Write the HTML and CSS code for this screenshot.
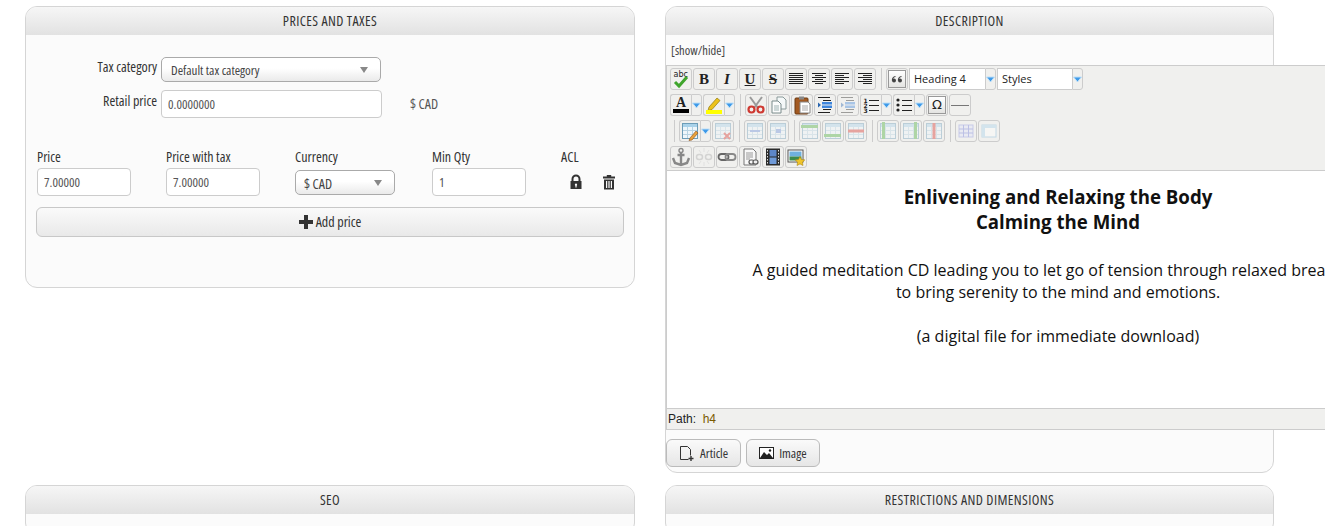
FILE: index.html
```html
<!DOCTYPE html>
<html lang="en">
<head>
    <meta charset="UTF-8">
    <title>Edit product</title>
    <link rel="stylesheet" href="styles.css">
</head>
<body>
    <!-- icon sheet for the editor toolbar -->
    <svg class="icon-sheet" xmlns="http://www.w3.org/2000/svg">
        <symbol id="i-grid" viewBox="0 0 20 20">
            <rect x="2.500" y="2.500" width="15" height="15" fill="#eef6fb" stroke="#6d9db8"/>
            <rect x="3" y="3" width="14" height="3" fill="#a9d2ea"/>
            <path d="M3 9.500h14M3 13.500h14M7.500 6v11M12.500 6v11" stroke="#b7d3e3"/>
        </symbol>
        <symbol id="i-indent" viewBox="0 0 20 20">
            <path d="M3 2.500h12M3 17.500h12M8 5.500h8M8 14.500h8" stroke="#222"/>
            <rect x="7" y="7" width="10" height="2.500" fill="#3f86dc"/>
            <rect x="7" y="10.500" width="10" height="2.500" fill="#3f86dc"/>
            <path d="M3 7.500l3 2.500-3 2.500z" fill="#2a66b0"/>
        </symbol>
        <symbol id="i-arrow" viewBox="0 0 9 9">
            <path d="M0.500 2h8L4.500 7z" fill="#3f9ae8" stroke="#bfe0f8"/>
        </symbol>
    </svg>

    <div class="page">
        <!-- 価格 -->
        <section class="panel">
            <h2 class="panel-title">PRICES AND TAXES</h2>
            <div class="panel-body prices">
                <div class="form-row tax-row">
                    <label class="form-label">Tax category</label>
                    <div class="select select-wide">Default tax category</div>
                </div>
                <div class="form-row retail-row">
                    <label class="form-label">Retail price</label>
                    <input class="text-input input-wide" type="text" value="0.0000000">
                    <span class="unit">$ CAD</span>
                </div>

                <div class="price-grid">
                    <div class="price-col col-price">
                        <label>Price</label>
                        <input class="text-input input-small" type="text" value="7.00000">
                    </div>
                    <div class="price-col col-price">
                        <label>Price with tax</label>
                        <input class="text-input input-small" type="text" value="7.00000">
                    </div>
                    <div class="price-col col-currency">
                        <label>Currency</label>
                        <div class="select select-small">$ CAD</div>
                    </div>
                    <div class="price-col col-price">
                        <label>Min Qty</label>
                        <input class="text-input input-small" type="text" value="1">
                    </div>
                    <div class="price-col">
                        <label>ACL</label>
                        <div class="acl-icons">
                            <svg width="14" height="16" viewBox="0 0 14 16"><path d="M3.500 7V5a3.500 3.500 0 0 1 7 0v2" fill="none" stroke="#333" stroke-width="2"/><path fill-rule="evenodd" d="M1.500 7h11v8h-11zM7 9.500a1.200 1.200 0 0 0-.6 2.200V13.500h1.200v-1.800A1.200 1.200 0 0 0 7 9.500z" fill="#333"/></svg>
                            <svg width="14" height="16" viewBox="0 0 14 16"><path fill-rule="evenodd" d="M1 2.500h3.800V1h4.400v1.500H13v2H1zM2 5.500h10V15.500H2zM4 7v7h1.200V7zM6.400 7v7h1.200V7zM8.800 7v7H10V7z" fill="#333"/></svg>
                        </div>
                    </div>
                </div>

                <button class="btn btn-add" type="button">
                    <svg width="14" height="14" viewBox="0 0 14 14"><path d="M5 0h4v5h5v4H9v5H5V9H0V5h5z" fill="#333"/></svg>
                    Add price
                </button>
            </div>
        </section>

        <!-- 説明 -->
        <section class="panel">
            <h2 class="panel-title">DESCRIPTION</h2>
            <div class="panel-body description">
                <a class="toggle-link">[show/hide]</a>

                <div class="editor">
                    <div class="toolbar">
                        <div class="tool-row">
                            <span class="tool"><svg viewBox="0 0 20 20"><text class="abc" x="2.500" y="8">abc</text><path d="M4 13l4 4 8-9" fill="none" stroke="#3fa52c" stroke-width="3"/></svg></span>
                            <span class="tool"><b class="tool-letter">B</b></span>
                            <span class="tool"><i class="tool-letter">I</i></span>
                            <span class="tool"><u class="tool-letter">U</u></span>
                            <span class="tool"><s class="tool-letter">S</s></span>
                            <span class="tool"><svg viewBox="0 0 20 20"><path d="M3 4.500h14M3 6.500h14M3 8.500h14M3 10.500h14M3 12.500h14M3 14.500h14" stroke="#222"/></svg></span>
                            <span class="tool"><svg viewBox="0 0 20 20"><path d="M3 4.500h14M6 6.500h8M3 8.500h14M6 10.500h8M3 12.500h14M6 14.500h8" stroke="#222"/></svg></span>
                            <span class="tool"><svg viewBox="0 0 20 20"><path d="M3 4.500h14M3 6.500h9M3 8.500h14M3 10.500h9M3 12.500h14M3 14.500h9" stroke="#222"/></svg></span>
                            <span class="tool"><svg viewBox="0 0 20 20"><path d="M3 4.500h14M8 6.500h9M3 8.500h14M8 10.500h9M3 12.500h14M8 14.500h9" stroke="#222"/></svg></span>
                            <span class="tool-sep"></span>
                            <span class="tool tool-pressed"><span class="tool-inner"><svg viewBox="0 0 16 16"><circle cx="5" cy="9.500" r="2" fill="#444"/><circle cx="11" cy="9.500" r="2" fill="#444"/><path d="M3.400 9.500C3.400 7 4.600 5.800 6.500 5.500M9.400 9.500C9.400 7 10.600 5.800 12.500 5.500" fill="none" stroke="#444" stroke-width="1.200"/></svg></span></span>
                            <span class="combo combo-format">Heading 4</span><span class="tool-arrow"><svg width="9" height="9"><use href="#i-arrow"/></svg></span>
                            <span class="combo combo-styles">Styles</span><span class="tool-arrow"><svg width="9" height="9"><use href="#i-arrow"/></svg></span>
                        </div>

                        <div class="tool-row">
                            <span class="tool tool-split"><svg viewBox="0 0 20 20"><text class="fore" x="5" y="12">A</text><rect x="2" y="14" width="16" height="4" fill="#000"/></svg></span><span class="tool-arrow"><svg width="9" height="9"><use href="#i-arrow"/></svg></span>
                            <span class="tool tool-split"><svg viewBox="0 0 20 20"><path d="M5 12l8-9 3 2.500-8 9-4 1z" fill="#ecc21c" stroke="#8f7a10" stroke-width=".7"/><rect x="2" y="15" width="16" height="4" fill="#ffff00"/></svg></span><span class="tool-arrow"><svg width="9" height="9"><use href="#i-arrow"/></svg></span>
                            <span class="tool-sep"></span>
                            <span class="tool"><svg viewBox="0 0 20 20"><path d="M4 2l8 11M16 2L8 13" stroke="#9a9a9a" stroke-width="2"/><circle cx="5.500" cy="14.500" r="3" fill="none" stroke="#cf3a32" stroke-width="2.200"/><circle cx="14.500" cy="14.500" r="3" fill="none" stroke="#cf3a32" stroke-width="2.200"/></svg></span>
                            <span class="tool"><svg viewBox="0 0 20 20"><path d="M8 2h6l3 3v9H8z" fill="#f4f8f8" stroke="#8a9a9a"/><path d="M3 6h6l3 3v9H3z" fill="#fbfcfc" stroke="#7a8c8c"/><path d="M5 11h5M5 13h5M5 15h5" stroke="#9fb3b3"/></svg></span>
                            <span class="tool"><svg viewBox="0 0 20 20"><rect x="3" y="3" width="13" height="16" rx="1" fill="#a35a22" stroke="#6c3a12"/><rect x="7" y="1.500" width="5" height="3" fill="#888"/><path d="M8 7h8l2 2v9H8z" fill="#fff" stroke="#888"/><path d="M10 11h6M10 13h6M10 15h6" stroke="#aaa"/></svg></span>
                            <span class="tool"><svg viewBox="0 0 20 20"><use href="#i-indent"/></svg></span>
                            <span class="tool tool-off"><svg viewBox="0 0 20 20"><use href="#i-indent"/></svg></span>
                            <span class="tool tool-split"><svg viewBox="0 0 20 20"><text class="mini" x="2.500" y="7.500">1</text><text class="mini" x="2.500" y="12.500">2</text><text class="mini" x="2.500" y="17.500">3</text><path d="M8 5.500h10M8 10.500h10M8 15.500h10" stroke="#222"/></svg></span><span class="tool-arrow"><svg width="9" height="9"><use href="#i-arrow"/></svg></span>
                            <span class="tool tool-split"><svg viewBox="0 0 20 20"><circle cx="4" cy="5" r="1.600" fill="#222"/><circle cx="4" cy="10" r="1.600" fill="#222"/><circle cx="4" cy="15" r="1.600" fill="#222"/><path d="M8 5.500h10M8 10.500h10M8 15.500h10" stroke="#222"/></svg></span><span class="tool-arrow"><svg width="9" height="9"><use href="#i-arrow"/></svg></span>
                            <span class="tool tool-pressed"><span class="tool-inner omega">Ω</span></span>
                            <span class="tool"><svg viewBox="0 0 20 20"><path d="M1 10.500h18" stroke="#777"/></svg></span>
                        </div>

                        <div class="tool-row">
                            <span class="tool-sep tool-sep-first"></span>
                            <span class="tool tool-split"><svg viewBox="0 0 20 20"><use href="#i-grid"/><path d="M10 17l6-7 2 2-6 7-3 .5z" fill="#e8a13a" stroke="#8a4f1a" stroke-width=".6"/></svg></span><span class="tool-arrow"><svg width="9" height="9"><use href="#i-arrow"/></svg></span>
                            <span class="tool tool-off"><svg viewBox="0 0 20 20"><use href="#i-grid"/><path d="M11 12l6 6M17 12l-6 6" stroke="#d8322a" stroke-width="2"/></svg></span>
                            <span class="tool-sep"></span>
                            <span class="tool tool-off"><svg viewBox="0 0 20 20"><use href="#i-grid"/><rect x="5" y="9" width="10" height="2" fill="#6c8fd8"/></svg></span>
                            <span class="tool tool-off"><svg viewBox="0 0 20 20"><use href="#i-grid"/><rect x="8" y="8" width="5" height="4" fill="#6c8fd8"/></svg></span>
                            <span class="tool-sep"></span>
                            <span class="tool tool-off"><svg viewBox="0 0 20 20"><use href="#i-grid"/><rect x="1" y="4" width="17" height="3" fill="#4caf3c"/></svg></span>
                            <span class="tool tool-off"><svg viewBox="0 0 20 20"><use href="#i-grid"/><rect x="1" y="13" width="17" height="3" fill="#4caf3c"/></svg></span>
                            <span class="tool tool-off"><svg viewBox="0 0 20 20"><use href="#i-grid"/><rect x="2" y="8.500" width="16" height="3" fill="#d8322a"/></svg></span>
                            <span class="tool-sep"></span>
                            <span class="tool tool-off"><svg viewBox="0 0 20 20"><use href="#i-grid"/><rect x="4" y="1" width="3" height="17" fill="#4caf3c"/></svg></span>
                            <span class="tool tool-off"><svg viewBox="0 0 20 20"><use href="#i-grid"/><rect x="13" y="1" width="3" height="17" fill="#4caf3c"/></svg></span>
                            <span class="tool tool-off"><svg viewBox="0 0 20 20"><use href="#i-grid"/><rect x="8.500" y="2" width="3" height="16" fill="#d8322a"/></svg></span>
                            <span class="tool-sep"></span>
                            <span class="tool tool-off"><svg viewBox="0 0 20 20"><rect x="3" y="4" width="14" height="12" fill="#dfe3fa" stroke="#8d96e0"/><path d="M3 8h14M3 12h14M7.500 4v12M12.500 4v12" stroke="#6f7ad8"/></svg></span>
                            <span class="tool tool-off"><svg viewBox="0 0 20 20"><rect x="3" y="4" width="14" height="12" fill="#fff" stroke="#7fb8d8"/><rect x="3" y="4" width="14" height="3" fill="#a8d4ec"/><rect x="3" y="4" width="3" height="12" fill="#a8d4ec"/></svg></span>
                        </div>

                        <div class="tool-row">
                            <span class="tool"><svg viewBox="0 0 20 20"><circle cx="10" cy="3.500" r="2" fill="none" stroke="#888" stroke-width="1.400"/><path d="M10 5.500V18M6.500 8h7M2 11l2 5 6 2 6-2 2-5" fill="none" stroke="#888" stroke-width="2.400"/></svg></span>
                            <span class="tool tool-off"><svg viewBox="0 0 20 20"><rect x="2.500" y="7.500" width="6" height="5" rx="2.500" fill="none" stroke="#aaa" stroke-width="1.500"/><rect x="11.500" y="7.500" width="6" height="5" rx="2.500" fill="none" stroke="#aaa" stroke-width="1.500"/><path d="M10 1v4M10 15v4M5 3l2 3M15 3l-2 3M5 17l2-3M15 17l-2-3" stroke="#ccc"/></svg></span>
                            <span class="tool"><svg viewBox="0 0 20 20"><rect x="1.500" y="7" width="10" height="6" rx="3" fill="none" stroke="#666" stroke-width="1.800"/><rect x="8.500" y="7" width="10" height="6" rx="3" fill="none" stroke="#888" stroke-width="1.800"/></svg></span>
                            <span class="tool"><svg viewBox="0 0 20 20"><path d="M4 2h9l3 3v13H4z" fill="#f8f8f8" stroke="#777"/><path d="M6 6h7M6 8h7M6 10h7M6 12h4" stroke="#999"/><rect x="9" y="13" width="5" height="4" rx="2" fill="none" stroke="#555" stroke-width="1.200"/><rect x="13" y="13" width="5" height="4" rx="2" fill="#eee" stroke="#555" stroke-width="1.200"/></svg></span>
                            <span class="tool"><svg viewBox="0 0 20 20"><rect x="3" y="1.500" width="14" height="17" fill="#2b2b2b"/><rect x="6.500" y="3" width="7" height="6.500" fill="#5d86c8"/><rect x="6.500" y="10.500" width="7" height="6.500" fill="#6f9ad8"/><path d="M4.500 3v14M15.500 3v14" stroke="#ddd" stroke-dasharray="1.500 1.500"/></svg></span>
                            <span class="tool"><svg viewBox="0 0 20 20"><rect x="2" y="3" width="15" height="12" fill="#fff" stroke="#555"/><rect x="3.500" y="4.500" width="12" height="5" fill="#6fb0de"/><rect x="3.500" y="9.500" width="12" height="4" fill="#3c8a4e"/><path d="M14 9.500l1.500 3 3.300.4-2.400 2.300.6 3.300-3-1.600-3 1.600.6-3.300-2.400-2.300 3.300-.4z" fill="#f0c52a" stroke="#a88414" stroke-width=".6"/></svg></span>
                        </div>
                    </div>

                    <div class="editor-content">
                        <h4>Enlivening and Relaxing the Body<br>Calming the Mind</h4>
                        <p>A guided meditation CD leading you to let go of tension through relaxed breathing<br>to bring serenity to the mind and emotions.</p>
                        <p>(a digital file for immediate download)</p>
                    </div>

                    <div class="editor-path">Path:&nbsp; <span class="path-tag">h4</span></div>
                </div>

                <div class="editor-buttons">
                    <button class="btn btn-small" type="button">
                        <svg width="16" height="15" viewBox="0 0 16 15"><path d="M9.500 13.500H1.500V.5h7l3 3v6" fill="none" stroke="#333"/><path d="M12 10v5M9.500 12.500h5" stroke="#333" stroke-width="1.400"/></svg>
                        Article
                    </button>
                    <button class="btn btn-small" type="button">
                        <svg width="15" height="12" viewBox="0 0 15 12"><rect x=".5" y=".5" width="14" height="11" fill="#fff" stroke="#222"/><path d="M1 11l4-6 3 3 2-2 4 5z" fill="#222"/><circle cx="11" cy="3.500" r="1.200" fill="#222"/></svg>
                        Image
                    </button>
                </div>
            </div>
        </section>

        <section class="panel">
            <h2 class="panel-title">SEO</h2>
            <div class="panel-body stub"></div>
        </section>

        <section class="panel">
            <h2 class="panel-title">RESTRICTIONS AND DIMENSIONS</h2>
            <div class="panel-body stub"></div>
        </section>
    </div>
</body>
</html>
```

FILE: styles.css
```css
* {
    margin: 0;
    padding: 0;
    box-sizing: border-box;
}
html,
body {
    height: 100%;
    overflow: hidden;
}
body {
    font-family: 'Open Sans', sans-serif;
    font-stretch: 75%;
    font-size: 13px;
    color: #333;
    background: #fff;
}
.icon-sheet {
    display: none;
}
.page {
    display: grid;
    grid-template-columns: 610px 609px;
    column-gap: 30px;
    row-gap: 12px;
    align-items: start;
    padding: 6px 0 0 25px;
}
.panel {
    border: 1px solid #d5d5d5;
    border-radius: 12px;
    background: #fbfbfb;
}
.panel-title {
    height: 28px;
    line-height: 27px;
    text-align: center;
    font-size: 14px;
    letter-spacing: 0.4px;
    font-weight: normal;
    color: #333;
    background: linear-gradient(#f6f6f6, #e2e2e2);
    border-radius: 11px 11px 0 0;
}
.prices {
    height: 252px;
    padding: 22px 10px 0;
}
.form-row {
    display: flex;
}
.form-label {
    width: 115px;
    margin-right: 4px;
    line-height: 18px;
    font-size: 14px;
    text-align: right;
}
.tax-row {
    height: 33px;
    padding-left: 6px;
}
.retail-row {
    height: 28px;
    padding-left: 6px;
    align-items: flex-start;
}
.tax-row .form-label {
    padding-top: 1px;
}
.retail-row .form-label {
    padding-top: 2px;
}
.select {
    display: flex;
    justify-content: space-between;
    align-items: center;
    height: 25px;
    padding: 1px 12px 0 9px;
    border: 1px solid #aaa;
    border-radius: 5px;
    color: #444;
    background: linear-gradient(#fff, #fff 45%, #eaeaea);
}
.select::after {
    content: "";
    border-left: 4px solid transparent;
    border-right: 4px solid transparent;
    border-top: 6px solid #888;
}
.select-wide {
    width: 220px;
}
.select-small {
    width: 100px;
    margin-top: 2px;
    padding-left: 8px;
    font-size: 14px;
}
.text-input {
    height: 28px;
    padding: 0 6px;
    border: 1px solid #ccc;
    border-radius: 4px;
    font-family: inherit;
    font-stretch: inherit;
    font-size: 13px;
    color: #555;
    background: #fff;
}
.input-wide {
    width: 221px;
}
.input-small {
    width: 94px;
}
.unit {
    margin-left: 28px;
    padding-top: 4px;
    font-size: 14px;
    color: #555;
}
.price-grid {
    display: flex;
    margin-top: 32px;
    padding-left: 1px;
}
.price-col {
    width: 129px;
    flex: none;
}
.price-col label {
    display: block;
    height: 18px;
    line-height: 14px;
    font-size: 14px;
}
.col-currency {
    width: 137px;
}
.acl-icons {
    display: flex;
    gap: 19px;
    padding: 6px 0 0 8px;
}
.btn {
    display: inline-flex;
    align-items: center;
    justify-content: center;
    gap: 3px;
    border: 1px solid #c8c8c8;
    border-radius: 6px;
    font-family: inherit;
    font-stretch: inherit;
    font-size: 13px;
    color: #333;
    background: linear-gradient(#fafafa, #e9e9e9);
}
.btn-add {
    display: flex;
    width: 588px;
    height: 30px;
    margin-top: 11px;
    padding-bottom: 1px;
    font-size: 14px;
}
.description {
    height: 437px;
}
.toggle-link {
    display: block;
    height: 30px;
    padding: 7px 0 0 5px;
    font-size: 12.500px;
    color: #444;
}
.editor {
    width: 783px;
    border: 1px solid #ccc;
    border-right: 0;
    background: #f0f0ee;
}
.toolbar {
    display: flex;
    flex-direction: column;
    gap: 4px;
    height: 105px;
    padding: 2px 0 0 3px;
    border-bottom: 1px solid #ccc;
}
.tool-row {
    display: flex;
    align-items: center;
    height: 22px;
}
.tool {
    display: flex;
    align-items: center;
    justify-content: center;
    flex: none;
    width: 22px;
    height: 22px;
    margin-right: 1px;
    border: 1px solid #ccc;
    border-radius: 3px;
    background: #f0f0ee;
}
.tool svg {
    width: 20px;
    height: 20px;
}
.tool-split {
    width: 21px;
    margin-right: 0;
    border-right: 0;
    border-radius: 3px 0 0 3px;
}
.tool-arrow {
    display: flex;
    align-items: center;
    justify-content: center;
    flex: none;
    width: 11px;
    height: 22px;
    margin-right: 1px;
    border: 1px solid #ccc;
    border-radius: 0 3px 3px 0;
}
.tool-off svg {
    opacity: 0.4;
}
.tool-inner {
    display: block;
    width: 18px;
    height: 18px;
    border: 1px solid #999;
    background: linear-gradient(#fff, #e4e4e2);
}
.tool-inner svg {
    display: block;
    width: 16px;
    height: 16px;
}
.omega {
    font: 13px/16px 'DejaVu Sans', sans-serif;
    text-align: center;
    color: #222;
}
.tool-letter {
    font-family: 'Liberation Serif', serif;
    font-size: 15px;
    font-weight: bold;
    color: #222;
}
.abc {
    font: 8px 'DejaVu Sans', sans-serif;
    fill: #222;
}
.fore {
    font: bold 14px 'Liberation Serif', serif;
    fill: #222;
}
.mini {
    font: bold 6px 'DejaVu Sans', sans-serif;
    fill: #222;
}
.tool-sep {
    flex: none;
    width: 1px;
    height: 22px;
    margin: 0 4px;
    background: #ccc;
}
.tool-sep-first {
    margin-left: 4px;
}
.combo {
    display: flex;
    align-items: center;
    flex: none;
    height: 22px;
    padding: 0 0 2px 4px;
    border: 1px solid #ccc;
    border-right: 0;
    font-family: 'Open Sans', sans-serif;
    font-stretch: 100%;
    font-size: 11px;
    color: #222;
    background: #fff;
}
.combo-format {
    width: 76px;
}
.combo-styles {
    width: 75px;
}
.editor-content {
    height: 237px;
    padding-top: 13px;
    overflow: hidden;
    font-family: 'Open Sans', sans-serif;
    font-stretch: 100%;
    font-size: 16px;
    line-height: 22px;
    text-align: center;
    color: #111;
    background: #fff;
}
.editor-content h4 {
    font-size: 18.670px;
    line-height: 25px;
    margin-bottom: 25px;
}
.editor-content p {
    margin-bottom: 22px;
}
.editor-path {
    height: 21px;
    padding: 3px 0 0 1px;
    border-top: 1px solid #ccc;
    font-family: 'Liberation Sans', sans-serif;
    font-size: 12px;
    color: #222;
}
.path-tag {
    color: #7a5a00;
}
.editor-buttons {
    display: flex;
    gap: 5px;
    padding-top: 9px;
}
.btn-small {
    height: 28px;
    padding: 0 12px;
    gap: 5px;
    background: linear-gradient(#fafafa, #e6e6e6);
    border-color: #bbb;
}
.stub {
    height: 20px;
}
```
